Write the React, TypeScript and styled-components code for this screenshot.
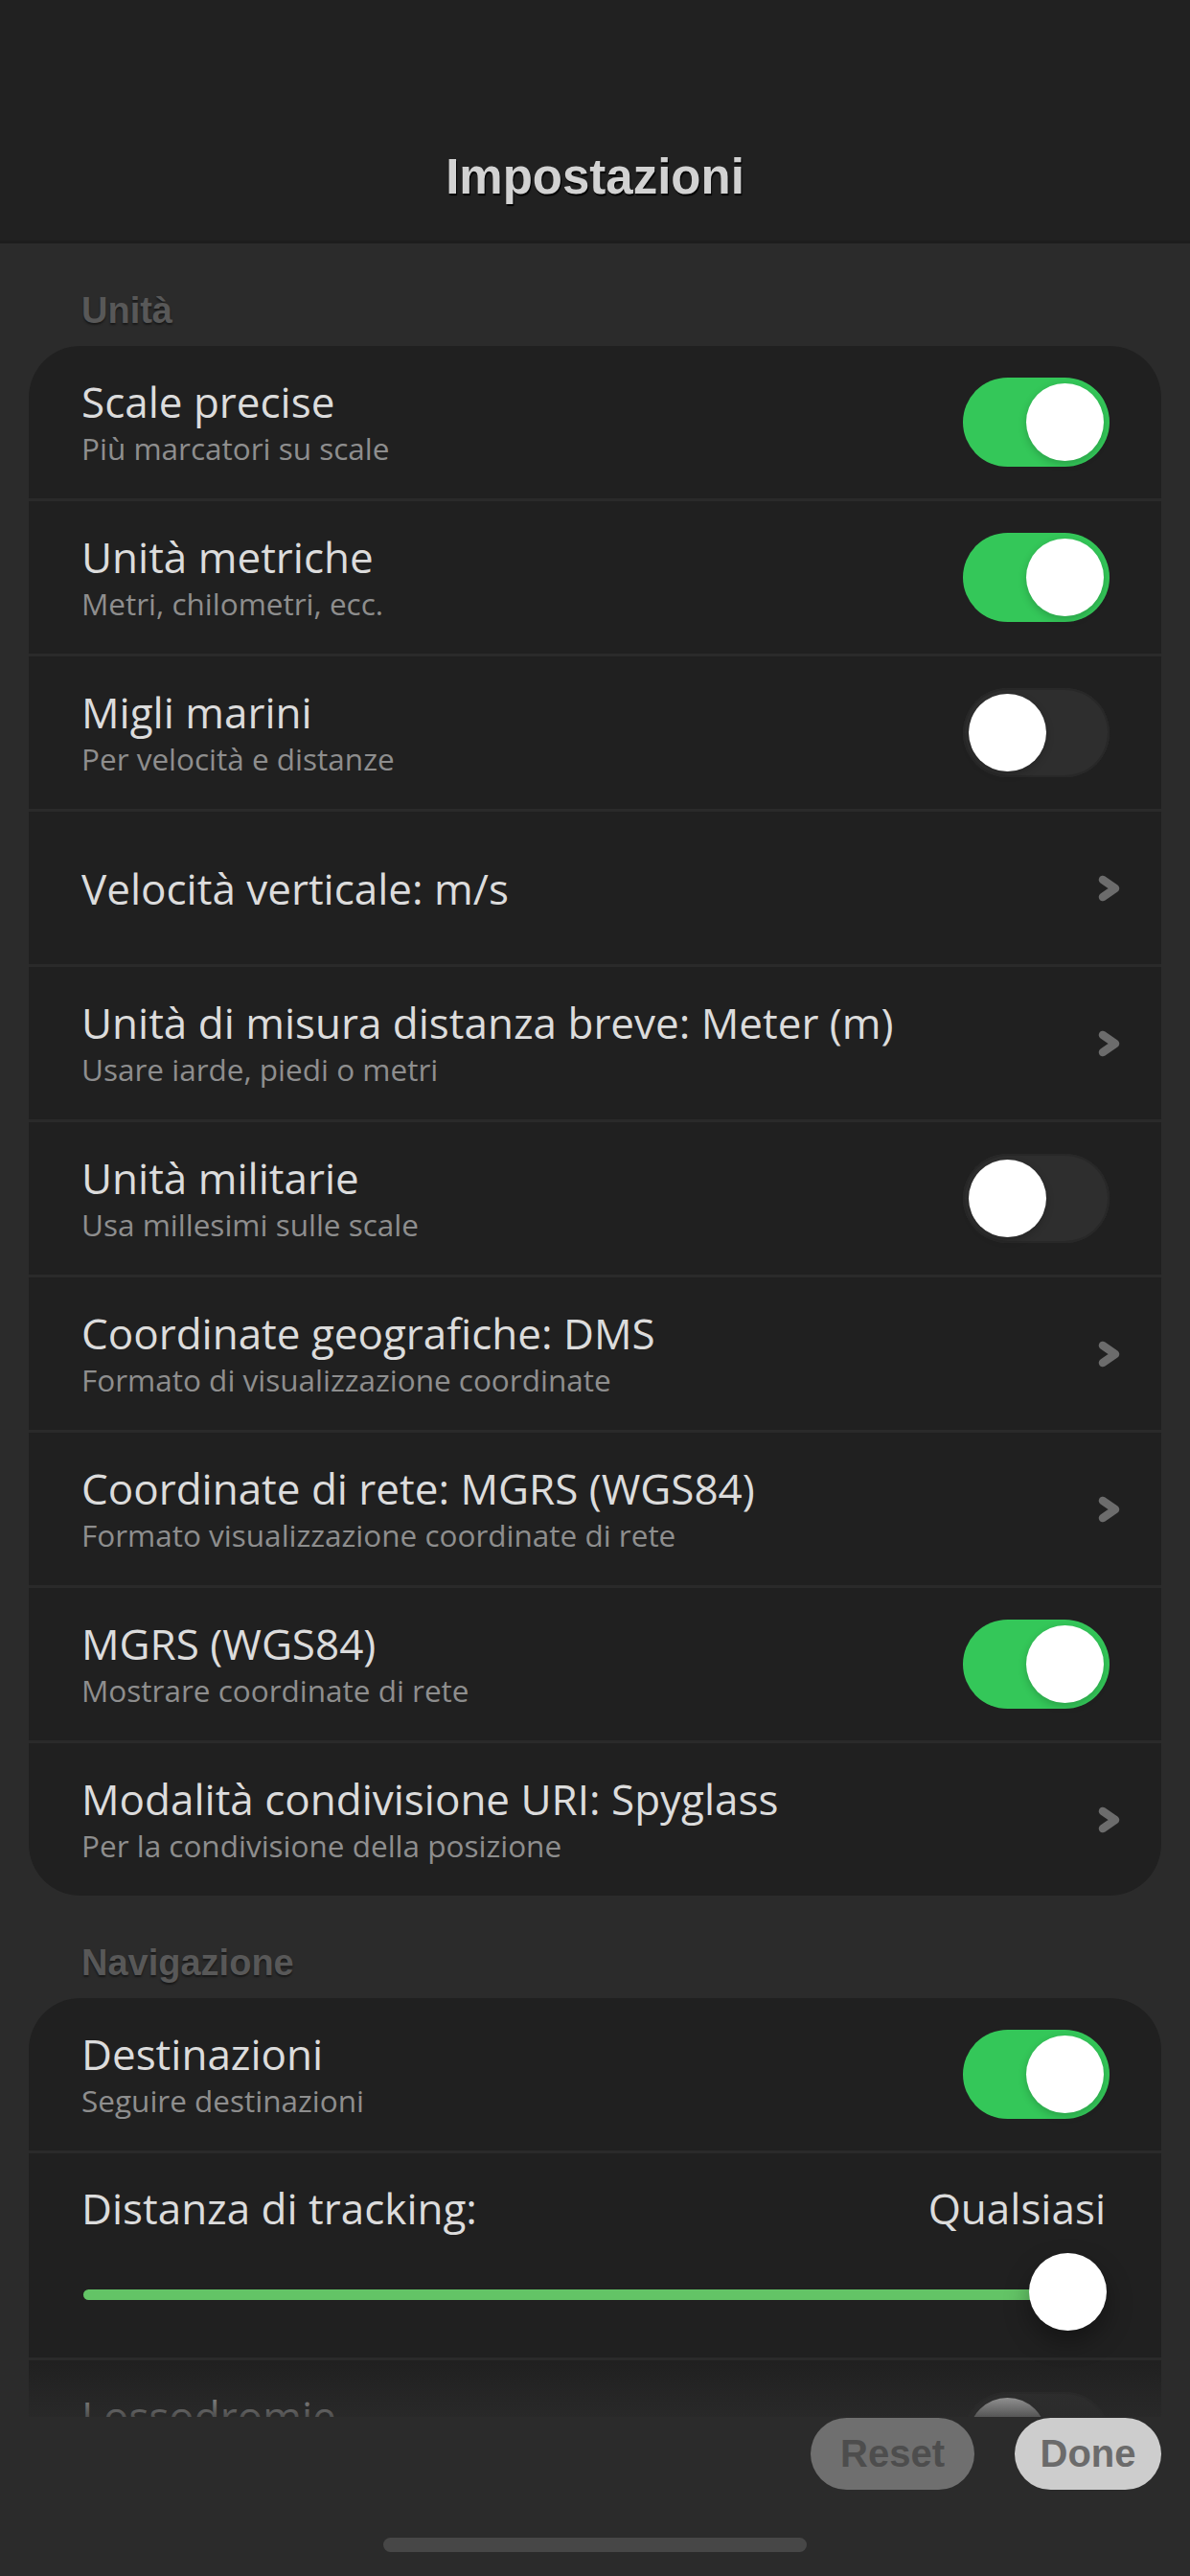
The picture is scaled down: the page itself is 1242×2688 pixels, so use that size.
import styled, { createGlobalStyle } from "styled-components";

type Item = {
  title: string;
  subtitle?: string;
  control: "on" | "off" | "link";
};

const units: Item[] = [
  { title: "Scale precise", subtitle: "Più marcatori su scale", control: "on" },
  { title: "Unità metriche", subtitle: "Metri, chilometri, ecc.", control: "on" },
  { title: "Migli marini", subtitle: "Per velocità e distanze", control: "off" },
  { title: "Velocità verticale: m/s", control: "link" },
  {
    title: "Unità di misura distanza breve: Meter (m)",
    subtitle: "Usare iarde, piedi o metri",
    control: "link",
  },
  { title: "Unità militarie", subtitle: "Usa millesimi sulle scale", control: "off" },
  {
    title: "Coordinate geografiche: DMS",
    subtitle: "Formato di visualizzazione coordinate",
    control: "link",
  },
  {
    title: "Coordinate di rete: MGRS (WGS84)",
    subtitle: "Formato visualizzazione coordinate di rete",
    control: "link",
  },
  { title: "MGRS (WGS84)", subtitle: "Mostrare coordinate di rete", control: "on" },
  {
    title: "Modalità condivisione URI: Spyglass",
    subtitle: "Per la condivisione della posizione",
    control: "link",
  },
];

const Chevron = () => (
  <ChevronIcon width="24" height="32" viewBox="0 0 24 32">
    <polyline
      points="5,7 18,16 5,25"
      fill="none"
      stroke="#6c6c6c"
      strokeWidth="8.5"
      strokeLinecap="round"
      strokeLinejoin="round"
    />
  </ChevronIcon>
);

const SettingRow = ({ item }: { item: Item }) => (
  <Row>
    <TextBlock>
      <Title>{item.title}</Title>
      {item.subtitle && <Subtitle>{item.subtitle}</Subtitle>}
    </TextBlock>
    {item.control === "link" ? <Chevron /> : <Toggle $on={item.control === "on"} />}
  </Row>
);

const App = () => {
  return (
    <Screen>
      <GlobalStyle />
      <Header>
        <HeaderTitle>Impostazioni</HeaderTitle>
      </Header>
      <Content>
        <SectionLabel>Unità</SectionLabel>
        <Card>
          {units.map((item) => (
            <SettingRow key={item.title} item={item} />
          ))}
        </Card>

        <SectionLabel>Navigazione</SectionLabel>
        <Card>
          <SettingRow
            item={{ title: "Destinazioni", subtitle: "Seguire destinazioni", control: "on" }}
          />
          <SliderRow>
            <SliderHead>
              <Title>Distanza di tracking:</Title>
              <SliderValue>Qualsiasi</SliderValue>
            </SliderHead>
            <Slider>
              <Track />
              <Thumb />
            </Slider>
          </SliderRow>
          <SettingRow
            item={{ title: "Lossodromie", subtitle: "Mostrare linee di rotta", control: "off" }}
          />
        </Card>
      </Content>
      <BottomBar>
        <Actions>
          <ActionButton $variant="secondary" $width={171}>
            Reset
          </ActionButton>
          <ActionButton $variant="primary" $width={153}>
            Done
          </ActionButton>
        </Actions>
        <HomeIndicator />
      </BottomBar>
    </Screen>
  );
};

export default App;

const GlobalStyle = createGlobalStyle`
  html, body {
    margin: 0;
    padding: 0;
    background: #2b2b2b;
  }
  * {
    box-sizing: border-box;
  }
`;

const Screen = styled.div`
  width: 1242px;
  height: 2688px;
  display: flex;
  flex-direction: column;
  overflow: hidden;
  background: #2b2b2b;
  font-family: "Open Sans", "Noto Sans", sans-serif;
`;

const Header = styled.header`
  flex-shrink: 0;
  height: 254px;
  padding-top: 155px;
  background: #212121;
  border-bottom: 3px solid #1d1d1d;
  text-align: center;
`;

const HeaderTitle = styled.h1`
  margin: 0;
  font: bold 51px/60px "Liberation Sans", Arial, sans-serif;
  color: #d2d2d2;
  text-shadow: 1px 2px 1px #000;
`;

const Content = styled.main`
  flex: 1;
  min-height: 0;
  overflow: hidden;
  padding: 0 30px;
`;

const SectionLabel = styled.h2`
  margin: 47px 0 14px 55px;
  font: bold 38px/46px "Liberation Sans", Arial, sans-serif;
  color: #585858;
  text-shadow: 0 2px 2px rgba(0, 0, 0, 0.45);
`;

const Card = styled.section`
  display: flex;
  flex-direction: column;
  background: #202020;
  border-radius: 54px;
  overflow: hidden;

  & > * + * {
    border-top: 3px solid #2a2a2a;
  }
`;

const Row = styled.div`
  box-sizing: content-box;
  height: 159px;
  padding: 0 54px 0 55px;
  display: flex;
  align-items: center;
  justify-content: space-between;
  gap: 24px;
`;

const TextBlock = styled.div`
  display: flex;
  flex-direction: column;
  min-width: 0;
`;

const Title = styled.div`
  font-size: 44px;
  line-height: 52px;
  color: #dcdcdc;
  white-space: nowrap;
`;

const Subtitle = styled.div`
  margin-top: 3px;
  font-size: 31.5px;
  line-height: 40px;
  color: #8e8e8e;
  white-space: nowrap;
`;

const Toggle = styled.span<{ $on: boolean }>`
  position: relative;
  flex-shrink: 0;
  width: 153px;
  height: 93px;
  border-radius: 47px;
  background: ${({ $on }) => ($on ? "#34c759" : "#2e2e2e")};
  box-shadow: ${({ $on }) => ($on ? "none" : "inset 0 0 0 2px #282828")};

  &::after {
    content: "";
    position: absolute;
    top: 6px;
    left: ${({ $on }) => ($on ? "66px" : "6px")};
    width: 81px;
    height: 81px;
    border-radius: 50%;
    background: #fff;
    box-shadow: 0 3px 8px rgba(0, 0, 0, 0.2);
  }
`;

const ChevronIcon = styled.svg`
  flex-shrink: 0;
  margin-right: -12px;
`;

const SliderRow = styled.div`
  box-sizing: content-box;
  height: 182px;
  padding: 31px 54px 0 55px;
  display: flex;
  flex-direction: column;
`;

const SliderHead = styled.div`
  display: flex;
  justify-content: space-between;
  align-items: baseline;
`;

const SliderValue = styled.div`
  margin-right: 4px;
  font-size: 44px;
  line-height: 52px;
  color: #dcdcdc;
`;

const Slider = styled.div`
  position: relative;
  height: 81px;
  margin-top: 21px;
  padding: 6px 40px 0 2px;
  display: flex;
  align-items: center;
`;

const Track = styled.div`
  flex: 1;
  height: 11px;
  border-radius: 6px;
  background: #63c466;
`;

const Thumb = styled.div`
  position: absolute;
  top: 0;
  right: 3px;
  width: 81px;
  height: 81px;
  border-radius: 50%;
  background: #fff;
  box-shadow: 0 12px 26px rgba(0, 0, 0, 0.35);
`;

const BottomBar = styled.footer`
  position: relative;
  flex-shrink: 0;
  height: 166px;
  padding: 1px 30px 0;
  background: #2b2b2b;
  display: flex;
  flex-direction: column;

  &::before {
    content: "";
    position: absolute;
    left: 0;
    right: 0;
    bottom: 100%;
    height: 58px;
    background: linear-gradient(rgba(43, 43, 43, 0), rgba(43, 43, 43, 0.8));
    pointer-events: none;
  }
`;

const Actions = styled.div`
  display: flex;
  justify-content: flex-end;
  gap: 42px;
`;

const ActionButton = styled.button<{ $variant: "primary" | "secondary"; $width: number }>`
  width: ${({ $width }) => $width}px;
  height: 75px;
  padding: 0;
  border: none;
  border-radius: 38px;
  font: bold 40px/75px "Liberation Sans", Arial, sans-serif;
  background: ${({ $variant }) => ($variant === "primary" ? "#cdcdcd" : "#6f6f6f")};
  color: ${({ $variant }) => ($variant === "primary" ? "#6b6b6b" : "#4d4d4d")};
`;

const HomeIndicator = styled.div`
  align-self: center;
  width: 442px;
  height: 15px;
  margin-top: 50px;
  border-radius: 8px;
  background: #474747;
`;
